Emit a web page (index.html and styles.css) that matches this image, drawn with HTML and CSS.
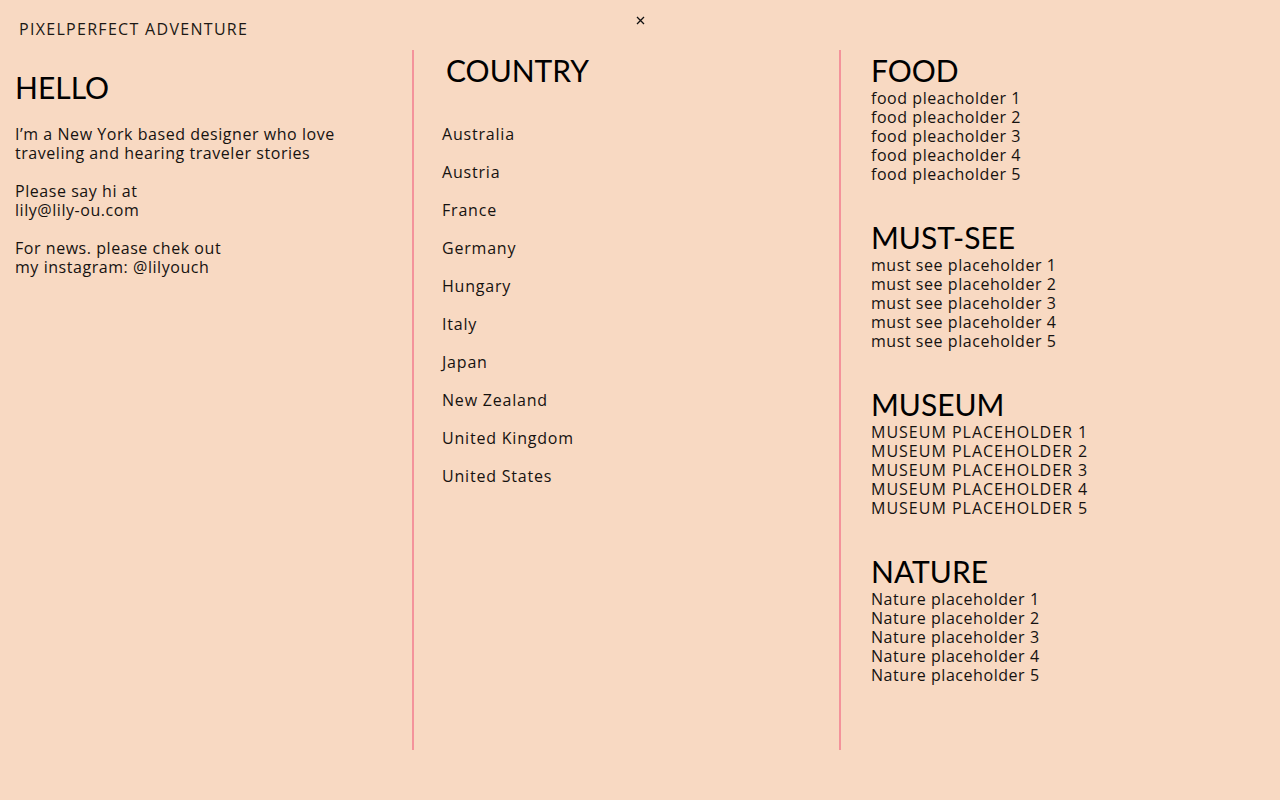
FILE: index.html
```html
<!DOCTYPE html>
<html lang="en">
<head>
<meta charset="utf-8">
<title>Pixelperfect Adventure</title>
<link rel="stylesheet" href="styles.css">
</head>
<body>
<header class="topbar">
  <div class="brand">PIXELPERFECT ADVENTURE</div>
  <button class="close" aria-label="Close">
    <svg width="9" height="9" viewBox="0 0 9 9"><path d="M1 1L8 8M8 1L1 8" stroke="#111" stroke-width="1.3" fill="none"/></svg>
  </button>
</header>
<main class="columns">
  <section class="col col-about">
    <h1 class="heading">HELLO</h1>
    <p class="para">I’m a New York based designer who love<br>traveling and hearing traveler stories</p>
    <p class="para">Please say hi at<br>lily@lily-ou.com</p>
    <p class="para">For news. please chek out<br>my instagram: @lilyouch</p>
  </section>
  <section class="col col-country">
    <h2 class="heading heading-country">COUNTRY</h2>
    <ul class="country-list">
      <li>Australia</li>
      <li>Austria</li>
      <li>France</li>
      <li>Germany</li>
      <li>Hungary</li>
      <li>Italy</li>
      <li>Japan</li>
      <li>New Zealand</li>
      <li>United Kingdom</li>
      <li>United States</li>
    </ul>
  </section>
  <section class="col col-info">
    <div class="group">
      <h2 class="heading">FOOD</h2>
      <ul class="items">
        <li>food pleacholder 1</li>
        <li>food pleacholder 2</li>
        <li>food pleacholder 3</li>
        <li>food pleacholder 4</li>
        <li>food pleacholder 5</li>
      </ul>
    </div>
    <div class="group">
      <h2 class="heading">MUST-SEE</h2>
      <ul class="items">
        <li>must see placeholder 1</li>
        <li>must see placeholder 2</li>
        <li>must see placeholder 3</li>
        <li>must see placeholder 4</li>
        <li>must see placeholder 5</li>
      </ul>
    </div>
    <div class="group">
      <h2 class="heading">MUSEUM</h2>
      <ul class="items items-caps">
        <li>MUSEUM PLACEHOLDER 1</li>
        <li>MUSEUM PLACEHOLDER 2</li>
        <li>MUSEUM PLACEHOLDER 3</li>
        <li>MUSEUM PLACEHOLDER 4</li>
        <li>MUSEUM PLACEHOLDER 5</li>
      </ul>
    </div>
    <div class="group">
      <h2 class="heading">NATURE</h2>
      <ul class="items">
        <li>Nature placeholder 1</li>
        <li>Nature placeholder 2</li>
        <li>Nature placeholder 3</li>
        <li>Nature placeholder 4</li>
        <li>Nature placeholder 5</li>
      </ul>
    </div>
  </section>
</main>
</body>
</html>
```

FILE: styles.css
```css
html, body {
  margin: 0;
  padding: 0;
}
body {
  background: #f8d9c2;
  color: #161210;
  font-family: "Open Sans", "DejaVu Sans", sans-serif;
  font-size: 16px;
  line-height: 19px;
  letter-spacing: 0.55px;
  height: 800px;
}
.topbar {
  height: 50px;
  display: flex;
  align-items: flex-start;
  box-sizing: border-box;
  padding: 19px 0 0 19px;
}
.brand {
  font-size: 16px;
  line-height: 20px;
  letter-spacing: 1.3px;
  width: 617px;
  color: #1c1814;
}
.close {
  border: 0;
  background: none;
  padding: 0;
  margin-top: -3px;
  width: 9px;
  height: 9px;
  display: flex;
  cursor: pointer;
}
.columns {
  display: grid;
  grid-template-columns: 412px 427px 1fr;
  height: 700px;
}
.col {
  box-sizing: border-box;
}
.col-country, .col-info {
  border-left: 2px solid #f4939b;
}
.heading {
  font-family: Lato, sans-serif;
  font-weight: 400;
  font-size: 30px;
  line-height: 38px;
  letter-spacing: 0;
  margin: 0;
  color: #000;
}
.col-about {
  padding: 18px 0 0 15px;
}
.col-about .heading {
  margin-bottom: 19px;
}
.para {
  margin: 0 0 19px;
}
.col-country {
  padding: 1px 0 0 28px;
}
.heading-country {
  padding-left: 4px;
  margin-bottom: 36px;
}
.country-list, .items {
  list-style: none;
  margin: 0;
  padding: 0;
}
.country-list li {
  margin-bottom: 19px;
  letter-spacing: 0.8px;
}
.items-caps {
  letter-spacing: 1px;
}
.col-info {
  padding: 1px 0 0 30px;
}
.group {
  margin-bottom: 34px;
}
```
